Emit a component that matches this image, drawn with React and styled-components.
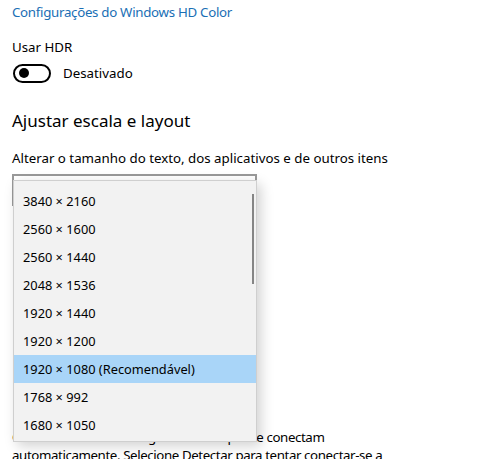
import React from "react";
import styled, { createGlobalStyle } from "styled-components";

const Global = createGlobalStyle`
  html, body { margin: 0; padding: 0; background: #fff; }
  body { font-family: "Noto Sans", "Open Sans", sans-serif; color: #000; overflow: hidden; }
`;

const Page = styled.div`
  position: relative;
  width: 500px;
  height: 459px;
  padding: 2px 0 0 12px;
  box-sizing: border-box;
  overflow: hidden;
`;

const Link = styled.a`
  display: block;
  font-size: 13.3px;
  line-height: 20px;
  letter-spacing: -0.3px;
  color: #1a6fb5;
  text-decoration: none;
`;

const Label = styled.div`
  font-size: 13.3px;
  line-height: 20px;
  margin-top: ${(p) => p.$mt || 0}px;
`;

const ToggleRow = styled.div`
  display: flex;
  align-items: center;
  gap: 12px;
  height: 20px;
  margin-top: 6px;
  font-size: 13.3px;
`;

const Track = styled.div`
  width: 38px;
  height: 19px;
  box-sizing: border-box;
  border: 2px solid #000;
  border-radius: 10px;
  display: flex;
  align-items: center;
  padding-left: 4px;
  margin-left: 1px;
`;

const Knob = styled.div`
  width: 10px;
  height: 10px;
  border-radius: 50%;
  background: #000;
`;

const Heading = styled.h2`
  margin: 24px 0 0;
  font-weight: 400;
  font-size: 17px;
  line-height: 28px;
`;

const Combo = styled.div`
  width: 245px;
  height: 32px;
  margin-top: 6px;
  box-sizing: border-box;
  border: 2px solid #999;
`;

const Para = styled.p`
  margin: 222px 0 0;
  font-size: 13.3px;
  line-height: 18px;
  letter-spacing: -0.4px;
  white-space: nowrap;
`;

const Popup = styled.div`
  position: absolute;
  left: 13px;
  top: 180px;
  width: 244px;
  height: 262px;
  box-sizing: border-box;
  padding-top: 6px;
  background: #f2f2f2;
  border: 1px solid #cfcfcf;
  box-shadow: 4px 4px 12px rgba(0, 0, 0, 0.18);
`;

const Item = styled.div`
  height: 28px;
  line-height: 28px;
  padding-left: 9px;
  font-size: 12.8px;
  background: ${(p) => (p.$selected ? "#a9d5f8" : "transparent")};
`;

const Scroll = styled.div`
  position: absolute;
  right: 2px;
  top: 13px;
  width: 2px;
  height: 90px;
  background: #858585;
`;

const items = [
  "3840 × 2160",
  "2560 × 1600",
  "2560 × 1440",
  "2048 × 1536",
  "1920 × 1440",
  "1920 × 1200",
  "1920 × 1080 (Recomendável)",
  "1768 × 992",
  "1680 × 1050",
];

export default function App() {
  return (
    <>
      <Global />
      <Page>
        <Link href="#">Configurações do Windows HD Color</Link>
        <Label $mt={15}>Usar HDR</Label>
        <ToggleRow>
          <Track>
            <Knob />
          </Track>
          Desativado
        </ToggleRow>
        <Heading>Ajustar escala e layout</Heading>
        <Label $mt={13}>Alterar o tamanho do texto, dos aplicativos e de outros itens</Label>
        <Combo />
        <Para>
          Os monitores mais antigos nem sempre se conectam
          <br />
          automaticamente. Selecione Detectar para tentar conectar-se a
          <br />
          eles.
        </Para>
        <Popup>
          {items.map((t, i) => (
            <Item key={t} $selected={i === 6}>
              {t}
            </Item>
          ))}
          <Scroll />
        </Popup>
      </Page>
    </>
  );
}
